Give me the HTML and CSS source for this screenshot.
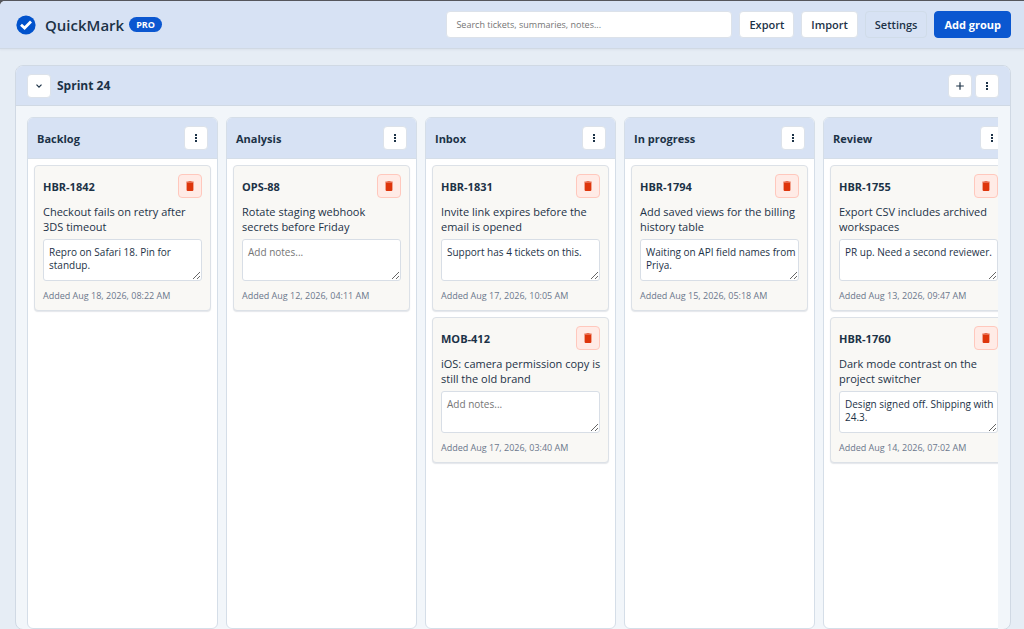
FILE: index.html
```html
<!DOCTYPE html>
<html lang="en">
<head>
    <meta charset="UTF-8">
    <meta name="viewport" content="width=device-width, initial-scale=1.0">
    <title>QuickMark</title>
    <link rel="stylesheet" href="styles.css">
</head>
<body>
<div class="app">
    <header class="topbar">
        <svg class="logo" viewBox="0 0 20 20" aria-hidden="true">
            <circle cx="10" cy="10" r="9.6" fill="#0052cc"/>
            <path d="M5 9.700 8.600 13 15 6.600" fill="none" stroke="#fff" stroke-width="2.800"/>
        </svg>
        <h1>QuickMark</h1>
        <span class="badge">PRO</span>
        <div class="toolbar">
            <input class="search" type="search" placeholder="Search tickets, summaries, notes..." aria-label="Search tickets">
            <button class="btn">Export</button>
            <button class="btn">Import</button>
            <button class="btn btn-ghost">Settings</button>
            <button class="btn btn-primary">Add group</button>
        </div>
    </header>

    <main>
        <section class="group">
            <div class="group-header">
                <button class="icon-btn" aria-label="Collapse group">
                    <svg viewBox="0 0 12 12"><path d="M3.5 4.7 6 7.2 8.5 4.7" fill="none" stroke="currentColor" stroke-width="1.2"/></svg>
                </button>
                <h2>Sprint 24</h2>
                <div class="group-actions">
                    <button class="icon-btn" aria-label="Add column">
                        <svg viewBox="0 0 12 12"><path d="M6 2.2V9.8M2.2 6H9.8" stroke="currentColor" stroke-width="1.2"/></svg>
                    </button>
                    <button class="icon-btn dots" aria-label="Group menu"></button>
                </div>
            </div>
            <div class="columns" id="columns"></div>
        </section>
    </main>
</div>
<script src="script.js"></script>
</body>
</html>
```
FILE: styles.css
```css
* {
    box-sizing: border-box;
}
body {
    margin: 0;
    height: 100vh;
    overflow: hidden;
    padding-top: 1px;
    background-color: #55565c;
    color: #1c3247;
    font-family: "Segoe UI", "Open Sans", "Noto Sans", sans-serif;
    font-size: 12px;
}
h1, h2, h3, p {
    margin: 0;
}
button, input, textarea {
    font-family: inherit;
    color: inherit;
}
.app {
    height: 100%;
    overflow: hidden;
    background-color: #e6edf5;
    border-top-left-radius: 5px;
}

/* top bar */
.topbar {
    display: flex;
    align-items: center;
    height: 48px;
    padding: 0 13px 0 16px;
    background-color: #d7e2f4;
    border-bottom: 1px solid #d0d9e4;
    box-shadow: 0 1px 2px rgba(30,50,80,0.06);
}
.logo {
    width: 20px;
    height: 20px;
}
h1 {
    margin-left: 9px;
    font-size: 15px;
    font-weight: 600;
}
.badge {
    margin-left: 5px;
    padding: 0 7px;
    border-radius: 8px;
    background-color: #0b57d0;
    color: #fff;
    font-size: 9px;
    font-weight: 700;
    line-height: 15px;
}
.toolbar {
    display: flex;
    flex: 1;
    align-items: center;
    justify-content: flex-end;
    gap: 7px;
}
.search {
    width: 286px;
    height: 27px;
    padding: 0 9px;
    border: 1px solid #dce2ea;
    border-radius: 4px;
    background-color: #fff;
    font-size: 9px;
}
.search::placeholder, textarea::placeholder {
    color: #757575;
}
.btn {
    height: 27px;
    padding: 0 9px;
    border: 1px solid #dce2ea;
    border-radius: 4px;
    background-color: #fff;
    font-size: 11px;
    font-weight: 600;
}
.btn-ghost {
    background-color: transparent;
    border-color: #d0dce9;
}
.btn-primary {
    border-color: #0b57d0;
    background-color: #0b57d0;
    color: #fff;
    font-weight: 700;
}

/* group */
main {
    padding: 16px 13px 0 15px;
}
.group {
    border: 1px solid #d0d9e4;
    border-radius: 8px;
    background-color: #f2f6fa;
}
.group-header {
    display: flex;
    align-items: center;
    height: 40px;
    padding: 0 11px;
    border-bottom: 1px solid #d0d9e4;
    border-radius: 7px 7px 0 0;
    background-color: #d7e2f4;
}
h2 {
    margin-left: 6px;
    font-size: 12px;
    font-weight: 700;
}
.group-actions {
    display: flex;
    gap: 3px;
    margin-left: auto;
}
.icon-btn {
    display: flex;
    align-items: center;
    justify-content: center;
    width: 24px;
    height: 24px;
    padding: 0;
    border: 1px solid #dce2ea;
    border-radius: 4px;
    background-color: #fff;
}
.icon-btn svg {
    width: 12px;
    height: 12px;
}
.dots::before {
    content: "";
    width: 2px;
    height: 2px;
    background-color: #1c3247;
    box-shadow: 0 -3px #1c3247, 0 3px #1c3247;
}

/* columns */
.columns {
    display: flex;
    gap: 8px;
    margin: 11px 12px 0 11px;
    overflow: hidden;
}
.column {
    flex: 0 0 191px;
    height: calc(100vh - 117px);
    border: 1px solid #d5dee8;
    border-radius: 6px;
    background-color: #fff;
}
.column-header {
    display: flex;
    align-items: center;
    justify-content: space-between;
    padding: 8px 9px;
    border-bottom: 1px solid #d5dee8;
    border-radius: 5px 5px 0 0;
    background-color: #d7e2f4;
}
h3 {
    font-size: 11px;
    font-weight: 700;
}
.cards {
    display: flex;
    flex-direction: column;
    gap: 6px;
    padding: 6px;
}
.card {
    padding: 8px;
    border: 1px solid #dce1e7;
    border-radius: 4px;
    background-color: #f9f8f5;
    box-shadow: 0 1px 1px rgba(30,50,80,0.12);
}
.card-top {
    display: flex;
    align-items: center;
    justify-content: space-between;
    font-size: 11px;
}
.delete {
    border-color: #ffc8bd;
    background-color: #ffebe6;
    color: #de350b;
}
.summary {
    margin: 6px -2px 5px 0;
    font-size: 11px;
    line-height: 15px;
}
textarea {
    display: block;
    width: 100%;
    height: 42px;
    padding: 6px 0 6px 5px;
    border: 1px solid #d8dee6;
    border-radius: 3px;
    background-color: #fff;
    font-size: 10px;
    line-height: 13px;
    resize: vertical;
    overflow: hidden;
}
.date {
    margin-top: 9px;
    color: #6b778c;
    font-size: 9px;
    line-height: 12px;
}
```
FILE: script.js
```js
const columns = [
    { name: 'Backlog', cards: [
        { key: 'HBR-1842', summary: 'Checkout fails on retry after 3DS timeout', notes: 'Repro on Safari 18. Pin for standup.', added: 'Aug 18, 2026, 08:22 AM' }
    ] },
    { name: 'Analysis', cards: [
        { key: 'OPS-88', summary: 'Rotate staging webhook secrets before Friday', notes: '', added: 'Aug 12, 2026, 04:11 AM' }
    ] },
    { name: 'Inbox', cards: [
        { key: 'HBR-1831', summary: 'Invite link expires before the email is opened', notes: 'Support has 4 tickets on this.', added: 'Aug 17, 2026, 10:05 AM' },
        { key: 'MOB-412', summary: 'iOS: camera permission copy is still the old brand', notes: '', added: 'Aug 17, 2026, 03:40 AM' }
    ] },
    { name: 'In progress', cards: [
        { key: 'HBR-1794', summary: 'Add saved views for the billing history table', notes: 'Waiting on API field names from Priya.', added: 'Aug 15, 2026, 05:18 AM' }
    ] },
    { name: 'Review', cards: [
        { key: 'HBR-1755', summary: 'Export CSV includes archived workspaces', notes: 'PR up. Need a second reviewer.', added: 'Aug 13, 2026, 09:47 AM' },
        { key: 'HBR-1760', summary: 'Dark mode contrast on the project switcher', notes: 'Design signed off. Shipping with 24.3.', added: 'Aug 14, 2026, 07:02 AM' }
    ] }
];

function cardHtml(card) {
    return `
        <article class="card">
            <div class="card-top">
                <strong>${card.key}</strong>
                <button class="icon-btn delete" aria-label="Delete ${card.key}">
                    <svg viewBox="0 0 12 12" fill="currentColor"><path d="M4.500 1h3v.600H9.600v1.400H2.400V1.600H4.500z" opacity=".7"/><path d="M2.600 3h6.800V10q0 1-1 1H3.600q-1 0-1-1z"/></svg>
                </button>
            </div>
            <p class="summary">${card.summary}</p>
            <textarea placeholder="Add notes..." aria-label="Notes for ${card.key}" spellcheck="false">${card.notes}</textarea>
            <p class="date">Added ${card.added}</p>
        </article>`;
}

document.getElementById('columns').innerHTML = columns.map(column => `
    <section class="column">
        <div class="column-header">
            <h3>${column.name}</h3>
            <button class="icon-btn dots" aria-label="${column.name} menu"></button>
        </div>
        <div class="cards">${column.cards.map(cardHtml).join('')}</div>
    </section>`).join('');
```
